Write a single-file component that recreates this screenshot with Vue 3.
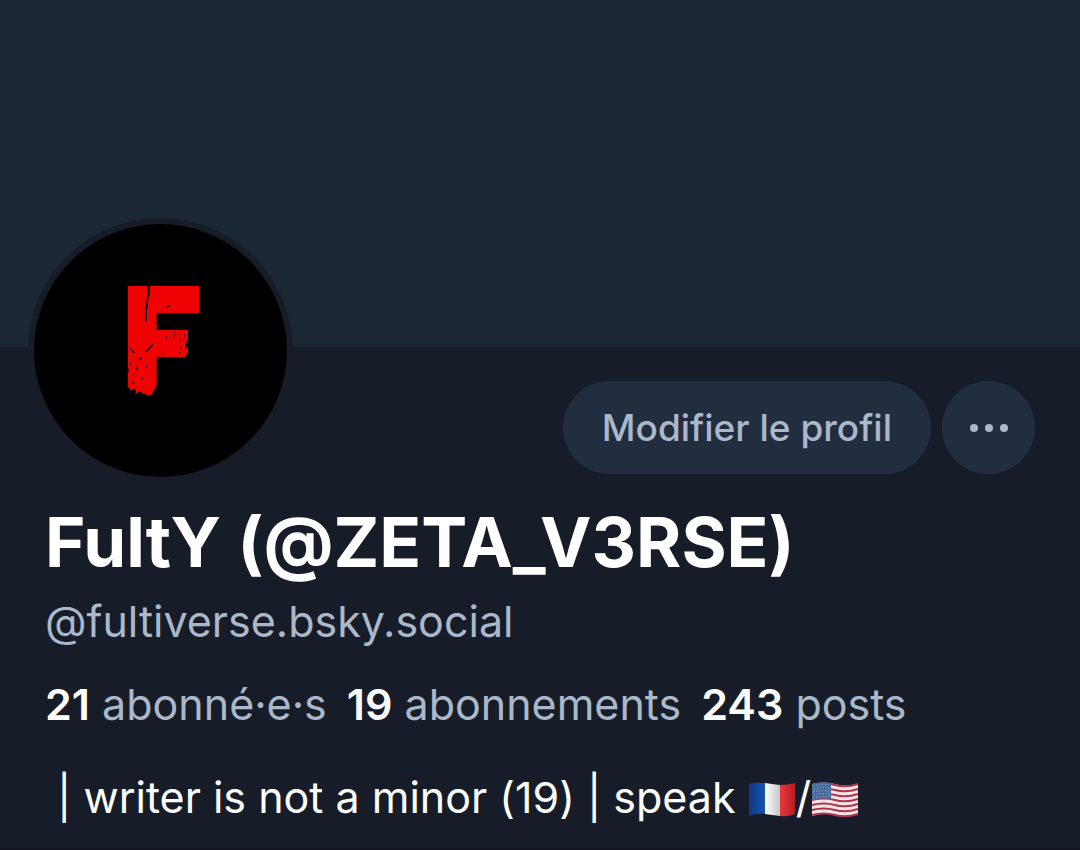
<script setup>
const stats = [
  { count: '21', label: 'abonné·e·s' },
  { count: '19', label: 'abonnements' },
  { count: '243', label: 'posts' },
]
const dots = [5, 20, 35]
const stripes = [0, 1, 2, 3, 4, 5, 6]
</script>

<template>
  <main class="profile">
    <div class="banner"></div>
    <header class="top">
      <div class="avatar">
        <svg viewBox="0 0 253 253" role="img" aria-label="FultY">
          <text class="mark" x="82" y="171">F</text>
          <g class="paint">
            <path d="M95 62 H165 V89 H122 V106 H154 V133 H122 V160 L95 150 Z" />
          </g>
          <g class="scratch">
            <path d="M154 104 H172 V136 H149 L154 128 Z M123 134 H156 V140 H123 Z M123 89 H170 V105 H123 Z" />
            <path d="M113 61 L116 61 L116 68 L114 77 L113 88 L113 98 L111 96 L112 80 L114 69 Z" />
            <path d="M132 84 L137 80 L135 83 Z M111 128 L119 119 L119 121 L113 128 Z" />
            <path d="M95 122 L101 129 L99 129 Z M105 134 L108 133 L107 136 Z M96 140 L97 137 L97 141 Z M102 145 L103 142 L104 147 Z M112 142 L113 140 L113 145 Z M107 152 L109 154 L108 156 Z M98 158 L101 159 L99 161 Z M115 154 L116 156 L115 159 Z M119 149 L120 147 L120 151 Z M99 149 L101 150 L99 152 Z" />
            <path d="M92 163 L95 163 L97 167 L100 164 L102 167 L101 171 L105 167 L108 169 L111 169 L113 173 L90 174 Z M120 166 L123 161 L124 174 L116 174 Z M92 143 L95 145 L94 149 Z" />
            <path d="M131 114 L133 112 L133 115 Z M140 109 L141 108 L140 116 Z M145 108 L146 110 L146 115 L147 118 L145 115 Z M150 109 L151 111 L150 115 Z M153 117 L155 113 L155 121 L151 126 L151 123 Z M141 126 L142 123 L142 127 Z M145 128 L147 128 L146 130 Z M135 124 L136 127 L135 126 Z M128 131 L131 129 L130 131 Z M137 113 L138 111 L138 114 Z M146 122 L148 124 L147 125 Z" />
          </g>
        </svg>
      </div>
      <div class="actions">
        <button class="edit" type="button">Modifier le profil</button>
        <button class="more" type="button" aria-label="Plus d’options">
          <svg viewBox="0 0 40 10" aria-hidden="true">
            <circle v-for="x in dots" :key="x" :cx="x" cy="5" r="4" />
          </svg>
        </button>
      </div>
    </header>
    <section class="info">
      <h1>FultY (@ZETA_V3RSE)</h1>
      <p class="handle">@fultiverse.bsky.social</p>
      <p class="stats">
        <a v-for="s in stats" :key="s.label" href="#"><strong>{{ s.count }}</strong>{{ ' ' + s.label }}</a>
      </p>
      <p class="bio"><span>{{ ' | writer is not a minor (19) | speak ' }}</span><svg class="flag" viewBox="0 0 48 36" role="img" aria-label="France">
          <defs>
            <linearGradient id="fr-blue"><stop offset="0" stop-color="#12387f" /><stop offset="1" stop-color="#1752b4" /></linearGradient>
            <linearGradient id="fr-white"><stop offset="0" stop-color="#ffffff" /><stop offset="1" stop-color="#c3c5ca" /></linearGradient>
            <linearGradient id="fr-red"><stop offset="0" stop-color="#e8383a" /><stop offset="1" stop-color="#b51d25" /></linearGradient>
          </defs>
          <path fill="url(#fr-blue)" d="M1 3 Q9 1 17 2 V33 Q9 32 1 35 Z" />
          <path fill="url(#fr-white)" d="M17 2 Q24 3 32 4 V35 Q24 34 17 33 Z" />
          <path fill="url(#fr-red)" d="M32 4 Q39 4 47 2 V33 Q39 36 32 35 Z" />
        </svg><span>/</span><svg class="flag" viewBox="0 0 48 36" role="img" aria-label="États-Unis">
          <path fill="#f3e3e6" d="M1 3 Q13 0 24 3 T47 3 V33 Q35 37 24 34 T1 35 Z" />
          <g fill="none" stroke="#a9364a" stroke-width="2">
            <path v-for="i in stripes" :key="i" :d="`M1 ${4 + i * 5} q12 -3 23 0 t23 -1`" />
          </g>
          <path fill="#46699d" d="M1 3 Q10 0 20 2 V18 Q10 16 1 19 Z" />
          <path fill="none" stroke="#b5c6dd" stroke-width="1" stroke-dasharray="1 2" d="M2 5 Q10 3 19 4 M3 8 Q11 6 19 7 M2 11 Q10 9 19 10 M3 14 Q11 12 19 13 M2 17 Q10 15 19 16" />
        </svg></p>
    </section>
  </main>
</template>

<style>
body {
  margin: 0;
  background: #161d28;
}
</style>

<style scoped>
.profile {
  min-height: 100vh;
  box-sizing: border-box;
  background: #161d28;
  color: #fff;
  font-family: Inter, "Liberation Sans", sans-serif;
  font-variant-ligatures: no-contextual;
  border-bottom: 2px solid #101520;
}
.banner {
  height: 347px;
  background: #1c2734;
}
.top {
  display: flex;
  justify-content: space-between;
  align-items: flex-end;
  margin-top: -129px;
  padding: 0 45px 0 28px;
}
.avatar {
  width: 253px;
  height: 253px;
  border: 6px solid #161d28;
  border-radius: 50%;
  background: #000;
  overflow: hidden;
}
.avatar svg {
  display: block;
  width: 100%;
  height: 100%;
}
.mark {
  font-family: "Open Sans", sans-serif;
  font-size: 152px;
  font-weight: 800;
  fill: #ee0202;
}
.paint {
  fill: #ee0202;
}
.scratch {
  fill: #000;
}
.actions {
  display: flex;
  gap: 11px;
  padding-bottom: 9px;
}
button {
  height: 93px;
  border: 0;
  border-radius: 47px;
  background: #222d3f;
  color: #abb8c9;
  font-family: inherit;
  font-size: 37px;
  font-weight: 500;
}
.edit {
  padding: 0 39px;
}
.more {
  display: flex;
  align-items: center;
  justify-content: center;
  width: 93px;
  padding: 0;
}
.more svg {
  width: 40px;
  height: 10px;
  fill: #abb8c9;
}
.info {
  padding: 19px 45px 23px;
}
h1,
p {
  margin: 0;
}
h1 {
  font-size: 69px;
  line-height: 80px;
  font-weight: 700;
}
p {
  font-size: 43px;
  line-height: 56px;
}
.handle {
  margin-top: 11px;
  color: #abb8c9;
}
.stats {
  display: flex;
  flex-wrap: wrap;
  column-gap: 20px;
  margin-top: 27px;
}
.stats a {
  color: #abb8c9;
  text-decoration: none;
}
.stats strong {
  color: #fff;
  font-weight: 600;
}
.bio {
  margin-top: 37px;
  white-space: pre-wrap;
}
.flag {
  width: 48px;
  height: 36px;
  vertical-align: -4px;
}
</style>
